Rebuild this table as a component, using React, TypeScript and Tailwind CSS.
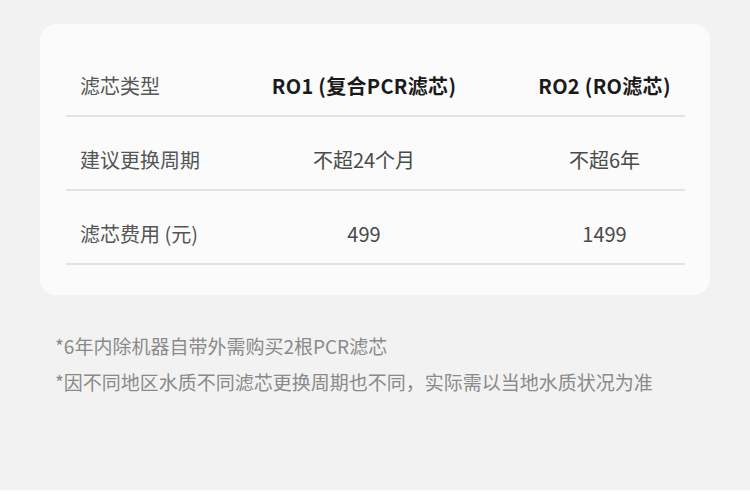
const rows = [
  { label: "滤芯类型", a: "RO1 (复合PCR滤芯)", b: "RO2 (RO滤芯)", head: true },
  { label: "建议更换周期", a: "不超24个月", b: "不超6年" },
  { label: "滤芯费用 (元)", a: "499", b: "1499" },
];

const notes = [
  "*6年内除机器自带外需购买2根PCR滤芯",
  "*因不同地区水质不同滤芯更换周期也不同，实际需以当地水质状况为准",
];

export default function App() {
  return (
    <div
      className="flex h-[495px] w-[750px] flex-col bg-white"
      style={{ fontFamily: '"Noto Sans CJK SC", "Noto Sans", sans-serif' }}
    >
      <div className="h-[490px] bg-[#f2f2f2] pt-[24px]">
        {/* Comparison card */}
        <div className="ml-[40px] h-[271px] w-[670px] rounded-[16px] bg-[#fbfbfb] pt-[19px] pr-[25px] pl-[26px]">
          {rows.map((r) => (
            <div
              key={r.label}
              className="grid h-[74px] grid-cols-[200px_196px_1fr] items-end border-b-2 border-[#e3e3e3] pb-[15px] text-[20px] leading-[28px]"
            >
              <div className="pl-[14px] text-[#555555]">{r.label}</div>
              <div
                className={
                  r.head
                    ? "text-center font-bold tracking-[0.3px] text-[#1a1a1a]"
                    : "text-center text-[#4a4a4a]"
                }
              >
                {r.a}
              </div>
              <div
                className={
                  r.head
                    ? "pl-[62px] text-center font-bold tracking-[0.3px] text-[#1a1a1a]"
                    : "pl-[62px] text-center text-[#4a4a4a]"
                }
              >
                {r.b}
              </div>
            </div>
          ))}
        </div>

        {/* Footnotes */}
        <div className="mt-[33px] pl-[55px] text-[19px] leading-[36px] text-[#8a8a8a]">
          {notes.map((n) => (
            <div key={n}>{n}</div>
          ))}
        </div>
      </div>
    </div>
  );
}
